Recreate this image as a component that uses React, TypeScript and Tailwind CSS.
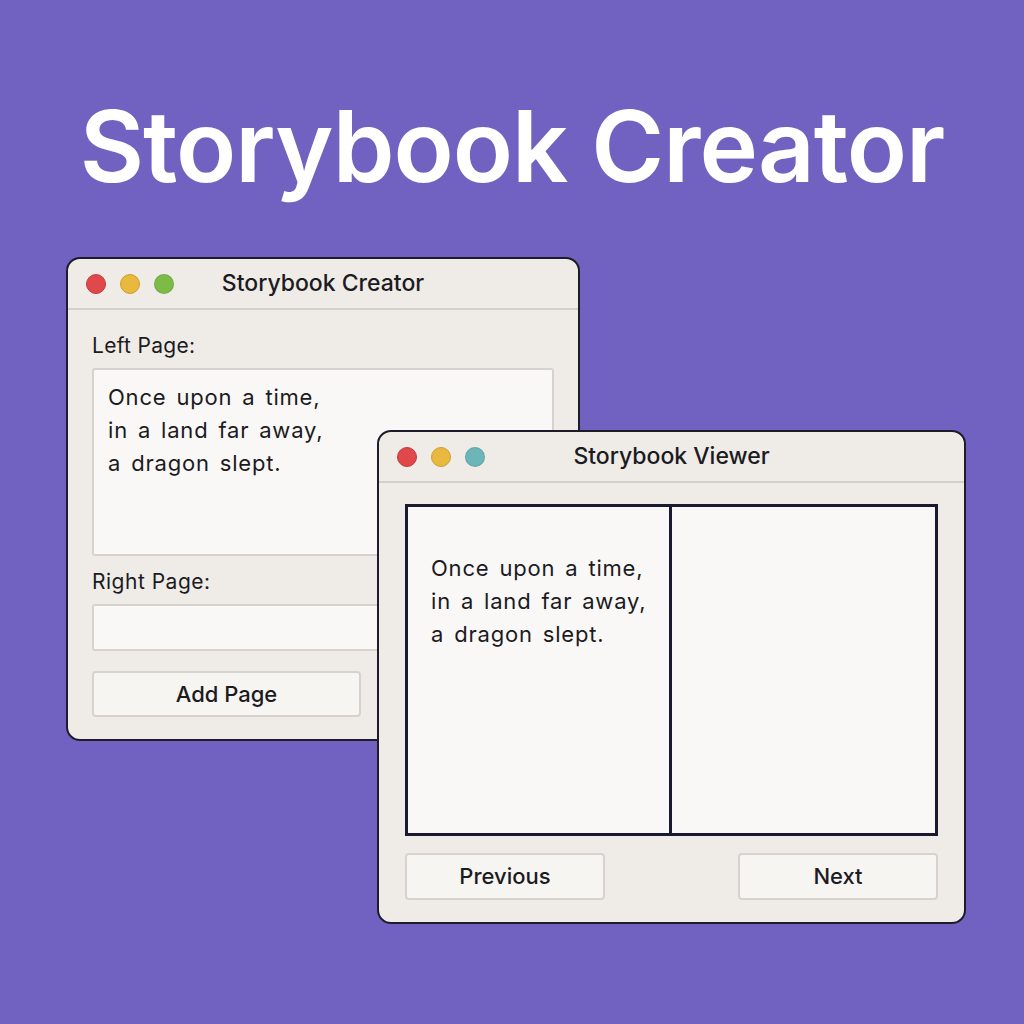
import React from "react";

function Lights({ third }: { third: string }) {
  return (
    <div className="flex items-center gap-[14px]">
      <span className="w-[20px] h-[20px] rounded-full bg-[#e0484b] border border-[#c23a3d]" />
      <span className="w-[20px] h-[20px] rounded-full bg-[#e8b93e] border border-[#cf9f2a]" />
      <span className={`w-[20px] h-[20px] rounded-full border border-black/10 ${third}`} />
    </div>
  );
}

function TitleBar({ title, third }: { title: string; third: string }) {
  return (
    <div className="relative h-[51px] flex items-center px-[18px] border-b-2 border-[#d3cfca]">
      <Lights third={third} />
      <div className="absolute inset-0 flex items-center justify-center text-[23px] font-medium text-[#1c1b22]">
        {title}
      </div>
    </div>
  );
}

function StoryText() {
  return (
    <>
      Once upon a time,
      <br />
      in a land far away,
      <br />
      a dragon slept.
    </>
  );
}

export default function App() {
  return (
    <div
      className="w-[1024px] h-[1024px] bg-[#7161c1] relative overflow-hidden"
      style={{ fontFamily: "Inter, 'Noto Sans', sans-serif" }}
    >
      <h1 className="pt-[86px] text-center text-white font-semibold text-[99px] leading-[120px] tracking-[-1px]">
        Storybook Creator
      </h1>

      {/* Creator window */}
      <div className="absolute left-[66px] top-[257px] w-[514px] h-[484px] bg-[#efece8] border-2 border-[#1e1c2b] rounded-[14px] overflow-hidden">
        <TitleBar title="Storybook Creator" third="bg-[#7dbb47]" />
        <div className="px-[24px] pt-[22px] flex flex-col">
          <div className="text-[21px] text-[#1c1b22] leading-[28px] tracking-[0.3px]">Left Page:</div>
          <div className="mt-[8px] h-[188px] bg-[#f9f8f6] border-2 border-[#d6d2cd] rounded-[3px] px-[14px] pt-[11px] text-[22px] leading-[33px] text-[#1c1b22] tracking-[0.8px] [word-spacing:3px]">
            <StoryText />
          </div>
          <div className="mt-[12px] text-[21px] text-[#1c1b22] leading-[28px] tracking-[0.5px]">Right Page:</div>
          <div className="mt-[8px] h-[47px] bg-[#f9f8f6] border-2 border-[#d6d2cd] rounded-[3px]" />
          <button className="mt-[20px] w-[269px] h-[46px] bg-[#f7f5f2] border-2 border-[#d6d2cd] rounded-[4px] text-[22px] font-medium text-[#1c1b22]">
            Add Page
          </button>
        </div>
      </div>

      {/* Viewer window */}
      <div className="absolute left-[377px] top-[430px] w-[589px] h-[494px] bg-[#efece8] border-2 border-[#1e1c2b] rounded-[14px] overflow-hidden">
        <TitleBar title="Storybook Viewer" third="bg-[#6db6b8]" />
        <div className="px-[26px] pt-[21px] flex flex-col">
          <div className="h-[332px] grid grid-cols-2 border-[3px] border-[#1a1930] bg-[#f9f8f6]">
            <div className="border-r-[3px] border-[#1a1930] pl-[23px] pt-[45px] text-[22px] leading-[33px] text-[#1c1b22] tracking-[0.8px] [word-spacing:3px]">
              <StoryText />
            </div>
            <div />
          </div>
          <div className="mt-[17px] flex justify-between">
            <button className="w-[200px] h-[47px] bg-[#f7f5f2] border-2 border-[#d6d2cd] rounded-[4px] text-[22px] font-medium text-[#1c1b22]">
              Previous
            </button>
            <button className="w-[200px] h-[47px] bg-[#f7f5f2] border-2 border-[#d6d2cd] rounded-[4px] text-[22px] font-medium text-[#1c1b22]">
              Next
            </button>
          </div>
        </div>
      </div>
    </div>
  );
}
